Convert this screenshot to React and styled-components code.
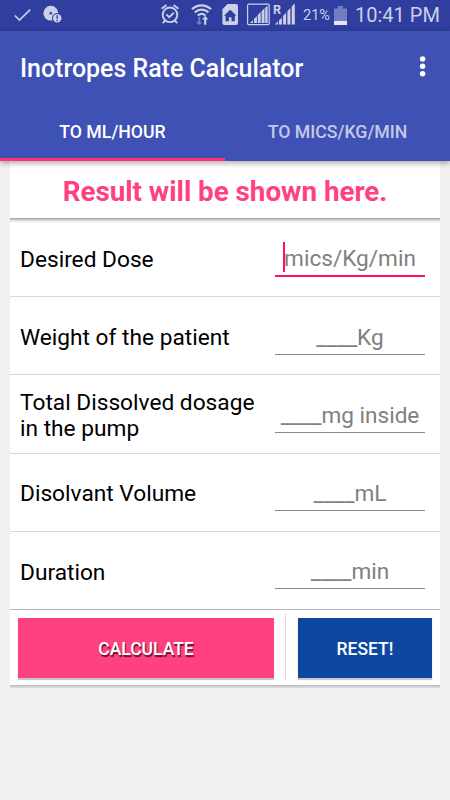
import React, { useState } from "react";
import styled, { createGlobalStyle } from "styled-components";

const fields = [
  { label: "Desired Dose", hint: "mics/Kg/min", focused: true },
  { label: "Weight of the patient", hint: "____Kg" },
  { label: "Total Dissolved dosage in the pump", hint: "____mg inside" },
  { label: "Disolvant Volume", hint: "____mL" },
  { label: "Duration", hint: "____min" },
];

const tabs = ["TO ML/HOUR", "TO MICS/KG/MIN"];

const StatusIcons = () => (
  <StatusSvg width="300" height="31" viewBox="0 0 300 31">
    {/* check */}
    <path d="M14.8 15.5l4.7 4.6L30.2 9.6" fill="none" stroke="#cbcfe8" strokeWidth="1.7" />
    {/* disc with alert */}
    <circle cx="50.8" cy="13.2" r="7.4" fill="#cbcfe8" />
    <circle cx="50.8" cy="13.2" r="1.3" fill="#303f9f" />
    <circle cx="57.2" cy="18.2" r="5.2" fill="#303f9f" />
    <circle cx="57.2" cy="18.2" r="4.2" fill="#cbcfe8" />
    <path d="M57.2 15.3v3.5M57.2 19.8v1.4" stroke="#303f9f" strokeWidth="1.4" />
    {/* alarm */}
    <g fill="none" stroke="#cbcfe8" strokeWidth="1.9">
      <circle cx="170" cy="14.8" r="7.3" />
      <path d="M166.3 14.4l2.9 2.8 4.6-4.5" />
      <path d="M161.6 8.8l4.8-3.7M178.4 8.8l-4.8-3.7M165.2 20.4l-2.4 2.8M174.8 20.4l2.4 2.8" />
    </g>
    {/* wifi */}
    <g fill="none" stroke="#cbcfe8" strokeWidth="2.2">
      <path d="M192 9.2c5.6-5.1 13.4-5.1 19 0" />
      <path d="M194.8 12.4c4-3.6 9.6-3.6 13.6 0" />
      <path d="M197.7 15.5c2.3-2 5.5-2 7.8 0" />
    </g>
    <path d="M198.4 16.7v5.2h-2.1l3 3.2 3-3.2h-2v-5.2z" fill="#7781bf" />
    <path d="M204.1 24.8v-5.3h-2l3.1-3.8 3.1 3.8h-2v5.3z" fill="#cbcfe8" />
    {/* sim card home */}
    <path d="M227.5 4H236q2 0 2 2v17q0 2-2 2h-11.6q-2 0-2-2V9.2z" fill="#cbcfe8" />
    <path d="M230.2 9.8l-6.3 6h1.7v5.4h3.3v-4h2.6v4h3.3v-5.4h1.7z" fill="#303f9f" />
    {/* signal 1 */}
    <rect x="247.6" y="4.2" width="21.6" height="20.4" rx="1.2" fill="none" stroke="#cbcfe8" strokeWidth="1.2" />
    <path d="M250 23l2.9-3v3zM254 18.9l2.9-3V23H254zM257.8 15.1l2.9-3V23h-2.9zM261.6 11.3l2.9-3V23h-2.9zM265.2 7.7l2.4-2V23h-2.4z" fill="#cbcfe8" />
    {/* signal 2 */}
    <path d="M275 24.6l2.9-3.4v3.4zM279 20.4l2.9-3v7.2H279zM283.1 15.9l3-3.2v11.9h-3zM287.4 11.3l3-3.2v16.5h-3zM291.7 6.6l3.1-3.2v21.2h-3.1z" fill="#cbcfe8" />
  </StatusSvg>
);

const App = () => {
  const [activeTab, setActiveTab] = useState(0);

  return (
    <>
      <GlobalStyle />
      <StatusBar>
        <StatusIcons />
        <Roaming>R</Roaming>
        <Percent>21%</Percent>
        <svg width="13" height="19" viewBox="0 0 13 19">
          <path d="M0 2.5h4V0h5v2.5h4V19H0z" fill="#747ebf" />
          <path d="M0 15h13v4H0z" fill="#e3e5f3" />
        </svg>
        <Clock>10:41 PM</Clock>
      </StatusBar>
      <Header>
        <Toolbar>
          <h1>Inotropes Rate Calculator</h1>
          <svg width="8" height="22" viewBox="0 0 8 22" fill="white">
            <circle cx="3.6" cy="2.9" r="2.7" />
            <circle cx="3.6" cy="10.3" r="2.7" />
            <circle cx="3.6" cy="17.7" r="2.7" />
          </svg>
        </Toolbar>
        <Tabs>
          {tabs.map((tab, i) => (
            <Tab key={tab} $active={activeTab === i} onClick={() => setActiveTab(i)}>
              {tab}
            </Tab>
          ))}
        </Tabs>
      </Header>
      <Card>
        <Result>Result will be shown here.</Result>
        {fields.map((field) => (
          <Row key={field.label}>
            <Label>{field.label}</Label>
            <Field $focused={field.focused}>
              <Hint $focused={field.focused}>{field.hint}</Hint>
            </Field>
          </Row>
        ))}
        <Actions>
          <CalculateButton>CALCULATE</CalculateButton>
          <Divider />
          <ResetButton>RESET!</ResetButton>
        </Actions>
      </Card>
    </>
  );
};

const GlobalStyle = createGlobalStyle`
  * {
    box-sizing: border-box;
  }
  body {
    margin: 0;
    min-height: 100vh;
    background: #f1f1f1;
    font-family: Roboto, sans-serif;
  }
`;
const StatusBar = styled.div`
  height: 31px;
  padding-bottom: 1px;
  display: flex;
  align-items: center;
  background: #303f9f;
  color: #cbcfe8;
  position: relative;
`;
const StatusSvg = styled.svg`
  flex: none;
  margin-bottom: -1px;
`;
const Roaming = styled.span`
  position: absolute;
  left: 273px;
  top: 3px;
  font-size: 12.5px;
  line-height: 14px;
  font-weight: 700;
`;
const Percent = styled.span`
  width: 34px;
  padding-left: 3px;
  font-size: 14.5px;
`;
const Clock = styled.span`
  margin-left: 8px;
  font-size: 20px;
  white-space: nowrap;
`;
const Header = styled.header`
  height: 130px;
  background: #3f51b5;
  color: white;
  position: relative;
  box-shadow: 0 2px 6px rgba(0, 0, 0, 0.35);
`;
const Toolbar = styled.div`
  height: 73px;
  padding: 0 23px 0 20px;
  display: flex;
  align-items: center;
  justify-content: space-between;
  svg {
    margin-top: -1px;
  }
  h1 {
    margin: 2px 0 0;
    font-size: 24.95px;
    font-weight: 500;
  }
`;
const Tabs = styled.div`
  height: 57px;
  display: flex;
`;
const Tab = styled.button`
  flex: 1;
  padding: 2px 0 0;
  border: none;
  border-bottom: 3px solid ${(p) => (p.$active ? "#ff2f78" : "transparent")};
  background: none;
  color: ${(p) => (p.$active ? "white" : "rgba(255, 255, 255, 0.7)")};
  font: 500 17.7px Roboto, sans-serif;
`;
const Card = styled.main`
  width: 430px;
  margin: 0 auto;
  background: white;
  box-shadow: 0 1px 0 #bfc0c0, 0 2px 0 #cdcdcd, 0 3px 0 #dadada;
`;
const Result = styled.div`
  height: 58px;
  padding-top: 4px;
  display: flex;
  align-items: center;
  justify-content: center;
  color: #ff4081;
  font-size: 27.75px;
  font-weight: 700;
  border-bottom: 1px solid #a9a9a9;
  box-shadow: 0 1px 0 #c6c6c6, 0 2px 0 #dedede, 0 3px 0 #eeeeee, 0 4px 0 #f9f9f9;
`;
const Row = styled.div`
  height: 78.2px;
  padding: 0 15px 0 10px;
  display: flex;
  align-items: center;
  justify-content: space-between;
  border-bottom: 1px solid #d8d8d8;
  &:nth-child(6) {
    border-bottom-color: #b9b9b9;
  }
`;
const Label = styled.div`
  width: 250px;
  padding-top: 5px;
  color: black;
  font-size: 22.7px;
  line-height: 26.5px;
`;
const Field = styled.div`
  width: 150px;
  height: 35px;
  margin-top: ${(p) => (p.$focused ? "4px" : "2.6px")};
  display: flex;
  justify-content: center;
  border-bottom: ${(p) => (p.$focused ? "2px solid #ff0f6b" : "1px solid #8a8a8a")};
`;
const Hint = styled.span`
  height: 30px;
  margin-left: ${(p) => (p.$focused ? "-1px" : "0")};
  border-left: ${(p) => (p.$focused ? "2px solid #ff0f6b" : "none")};
  color: #808080;
  font-size: 22.6px;
  line-height: ${(p) => (p.$focused ? "33px" : "35px")};
  text-indent: ${(p) => (p.$focused ? "-1px" : "0")};
  white-space: nowrap;
`;
const Actions = styled.div`
  height: 75px;
  padding: 8px 8px 7px;
  display: flex;
  align-items: center;
`;
const Button = styled.button`
  height: 60px;
  padding: 2px 0 0;
  border: none;
  color: white;
  font: 500 17.5px Roboto, sans-serif;
  box-shadow: 0 2px 1px rgba(0, 0, 0, 0.22);
`;
const CalculateButton = styled(Button)`
  width: 256px;
  background: #ff4081;
  text-shadow: 1px 2px 1px rgba(0, 0, 0, 0.65);
`;
const ResetButton = styled(Button)`
  width: 134px;
  background: #0d47a1;
`;
const Divider = styled.div`
  width: 1px;
  height: 67px;
  margin: 0 12px 0 11px;
  background: #dadada;
`;

export default App;
